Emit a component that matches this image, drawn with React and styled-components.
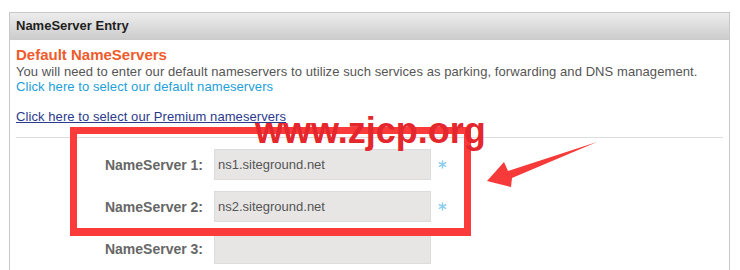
import React from 'react'
import styled, { createGlobalStyle } from 'styled-components'

const GlobalStyle = createGlobalStyle`
  html, body {
    margin: 0;
    padding: 0;
    background: #fff;
  }
  body {
    font-family: "Liberation Sans", Arial, sans-serif;
  }
`

const Page = styled.div`
  position: relative;
  width: 740px;
  height: 270px;
  overflow: hidden;
  box-sizing: border-box;
  padding: 12px 0 0 9px;
`

const Panel = styled.section`
  width: 721px;
  min-height: 300px;
  box-sizing: border-box;
  border: 1px solid #c8c8c8;
  background: #fff;
`

const PanelHeader = styled.h2`
  display: flex;
  align-items: center;
  height: 27px;
  margin: 0;
  padding: 0 6px 2px;
  box-sizing: border-box;
  background: linear-gradient(#ededed, #cbcbcb);
  font-size: 13px;
  font-weight: 700;
  color: #1e1e1e;
`

const PanelBody = styled.div`
  padding: 6px 6px 0;
`

const SectionTitle = styled.h3`
  margin: 0;
  font-size: 15px;
  line-height: 18px;
  font-weight: 700;
  color: #ef5b2b;
`

const Text = styled.p`
  margin: 0;
  font-size: 13px;
  line-height: 15px;
  letter-spacing: 0.08px;
  color: #555;
`

const Link = styled.a`
  display: block;
  font-size: 13px;
  line-height: 15px;
  letter-spacing: 0.08px;
  color: ${(p) => (p.$dark ? '#2b3a8c' : '#22a0d8')};
  text-decoration: ${(p) => (p.$dark ? 'underline' : 'none')};
  margin-top: ${(p) => (p.$gap ? '15px' : '0')};
  cursor: pointer;
`

const Divider = styled.hr`
  margin: 13px 0 0;
  border: 0;
  border-top: 1px solid #dcdcdc;
`

const Form = styled.div`
  display: flex;
  flex-direction: column;
  gap: 11px;
  margin-top: 11px;
`

const Row = styled.div`
  display: grid;
  grid-template-columns: 187px 217px auto;
  column-gap: 11px;
  align-items: center;
`

const Label = styled.label`
  text-align: right;
  font-size: 14px;
  font-weight: 700;
  color: #666;
`

const Field = styled.input`
  height: 31px;
  box-sizing: border-box;
  margin: 0;
  padding: 0 3px;
  border: 1px solid #dcdcdc;
  background: #e8e6e5;
  font-family: "Liberation Sans", Arial, sans-serif;
  font-size: 13px;
  color: #555;
  outline: none;
`

const Required = styled.span`
  display: flex;
  margin-left: -4px;
`

const Highlight = styled.div`
  position: absolute;
  left: 70px;
  top: 127px;
  width: 401px;
  height: 109px;
  box-sizing: border-box;
  border: 7px solid #fb3a3a;
  border-bottom-width: 8px;
  pointer-events: none;
`

const Watermark = styled.div`
  position: absolute;
  left: 255px;
  top: 113px;
  font-size: 36px;
  line-height: 36px;
  font-weight: 700;
  color: #e4272c;
  pointer-events: none;
`

const ArrowLayer = styled.svg`
  position: absolute;
  left: 0;
  top: 0;
  pointer-events: none;
`

const Asterisk = () => (
  <svg width="9" height="9" viewBox="0 0 10 10">
    <g stroke="#8ccdef" strokeWidth="1.6" strokeLinecap="round">
      <line x1="5" y1="1" x2="5" y2="9" />
      <line x1="1.5" y1="3" x2="8.5" y2="7" />
      <line x1="1.5" y1="7" x2="8.5" y2="3" />
    </g>
  </svg>
)

const servers = [
  { label: 'NameServer 1:', value: 'ns1.siteground.net', required: true },
  { label: 'NameServer 2:', value: 'ns2.siteground.net', required: true },
  { label: 'NameServer 3:', value: '', required: false },
]

const App = () => {
  return (
    <Page>
      <GlobalStyle />
      <Panel>
        <PanelHeader>NameServer Entry</PanelHeader>
        <PanelBody>
          <SectionTitle>Default NameServers</SectionTitle>
          <Text>
            You will need to enter our default nameservers to utilize such services as parking, forwarding and DNS management.
          </Text>
          <Link>Click here to select our default nameservers</Link>
          <Link $dark $gap>
            Click here to select our Premium nameservers
          </Link>
          <Divider />
          <Form>
            {servers.map((s) => (
              <Row key={s.label}>
                <Label>{s.label}</Label>
                <Field readOnly value={s.value} />
                {s.required ? (
                  <Required>
                    <Asterisk />
                  </Required>
                ) : (
                  <span />
                )}
              </Row>
            ))}
          </Form>
        </PanelBody>
      </Panel>

      <Highlight />
      <Watermark>www.zjcp.org</Watermark>
      <ArrowLayer width="740" height="270" viewBox="0 0 740 270">
        <polygon
          points="487,181 504,162 508,171 597,142 512,178 511,187"
          fill="#f63a3a"
        />
      </ArrowLayer>
    </Page>
  )
}

export default App
